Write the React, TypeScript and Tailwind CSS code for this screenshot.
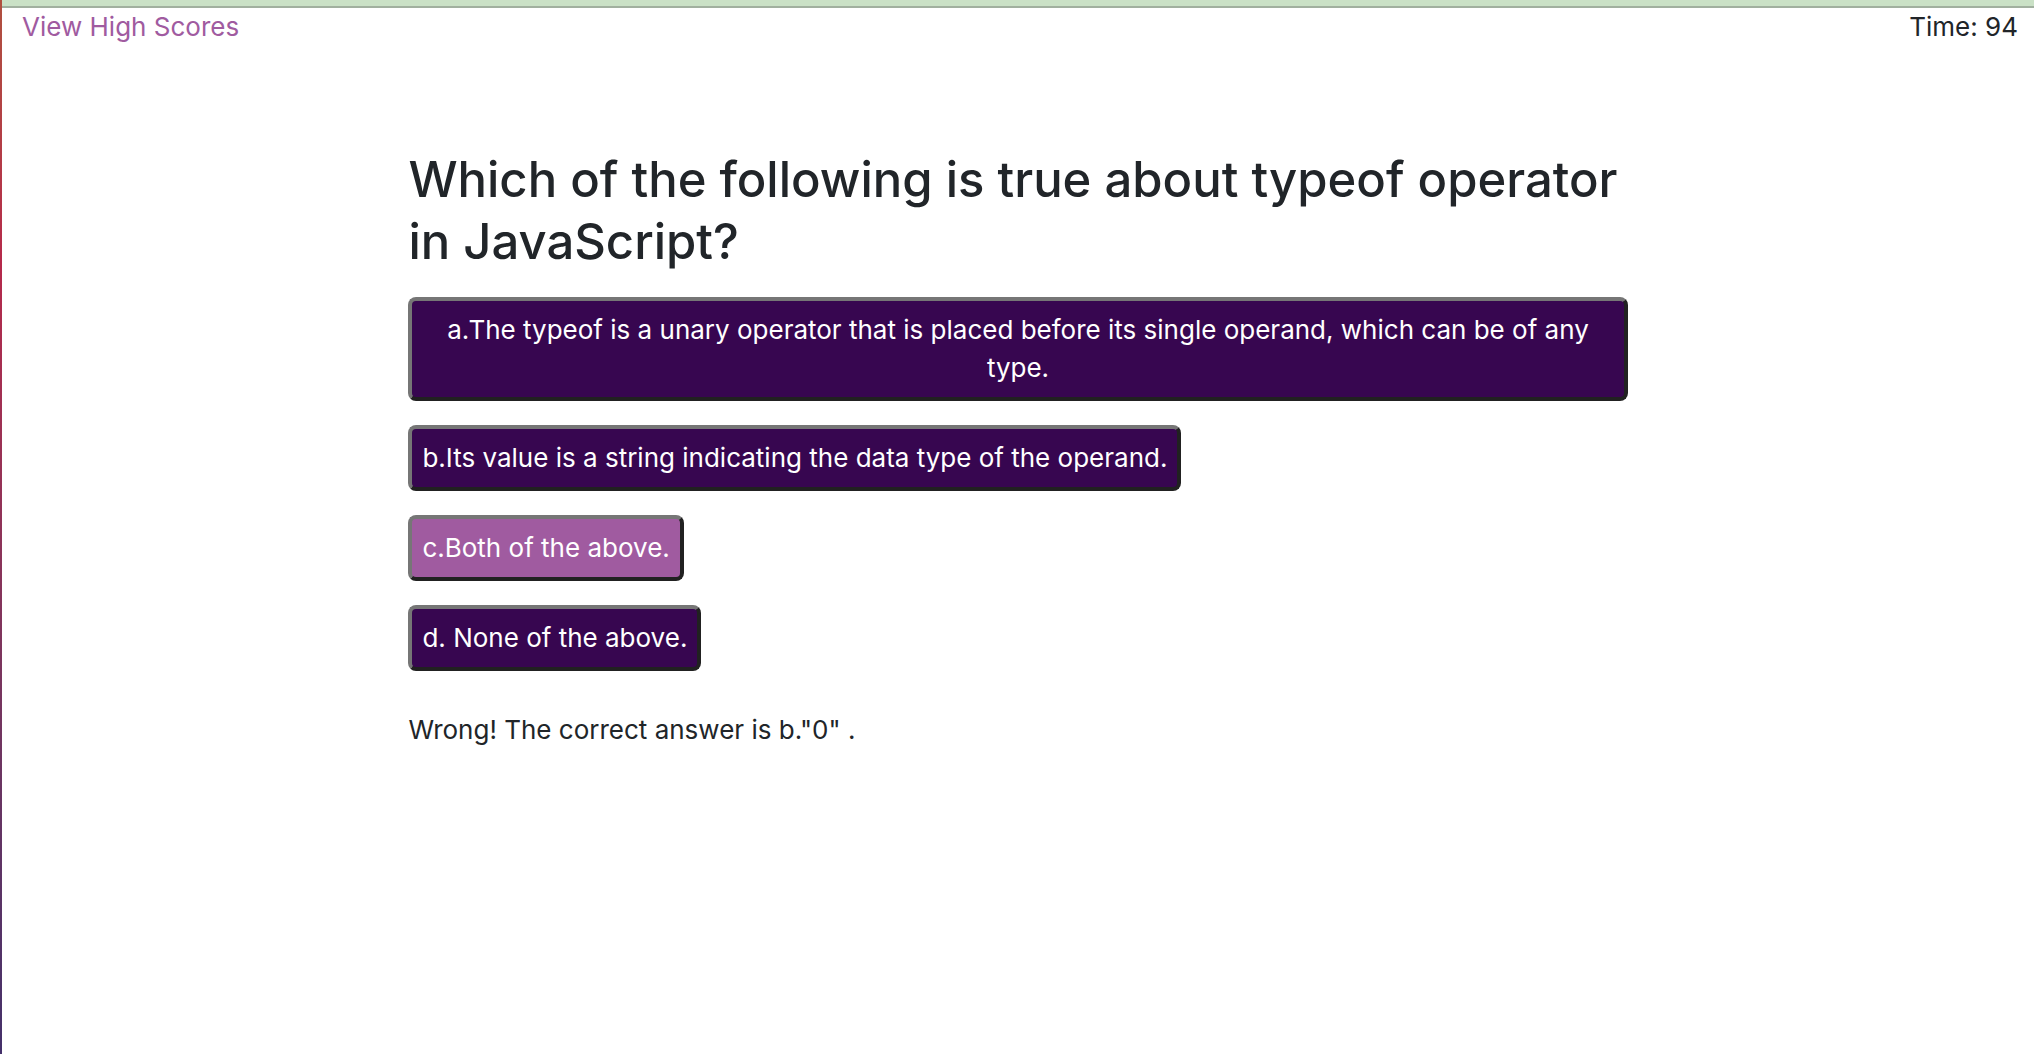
const choices = [
  "a.The typeof is a unary operator that is placed before its single operand, which can be of any type.",
  "b.Its value is a string indicating the data type of the operand.",
  "c.Both of the above.",
  "d. None of the above.",
];

const activeChoice = 2;

export default function App() {
  return (
    <div className="flex min-h-screen bg-white font-['Inter',sans-serif] text-[26px] leading-[38px] text-[#212529]">
      <div className="w-[2px] shrink-0 bg-linear-to-b from-[#b0503f] via-[#b5294b] via-25% to-[#44306a]" />
      <div className="flex-1">
        <div className="h-2 border-b-2 border-[#a1b09f] bg-[#cae1c6]" />
        <header className="flex justify-between pr-4 pl-5">
          <a href="#scores" className="text-[#a05ba0]">
            View High Scores
          </a>
          <div>Time: 94</div>
        </header>
        <main className="mx-auto mt-[103px] w-3/5">
          <h1 className="mb-6 text-[49px] leading-[62px] font-medium">
            Which of the following is true about typeof operator in JavaScript?
          </h1>
          <ul className="flex flex-col items-start gap-6">
            {choices.map((choice, i) => (
              <li key={choice}>
                <button
                  type="button"
                  className={
                    "rounded-lg border-4 border-t-[#767676] border-r-[#212121] border-b-[#212121] border-l-[#767676] p-[10px] text-center text-white " +
                    (i === activeChoice ? "bg-[#a05ba0]" : "bg-[#370650]")
                  }
                >
                  {choice}
                </button>
              </li>
            ))}
          </ul>
          <p className="mt-10">Wrong! The correct answer is b."0" .</p>
        </main>
      </div>
    </div>
  );
}
